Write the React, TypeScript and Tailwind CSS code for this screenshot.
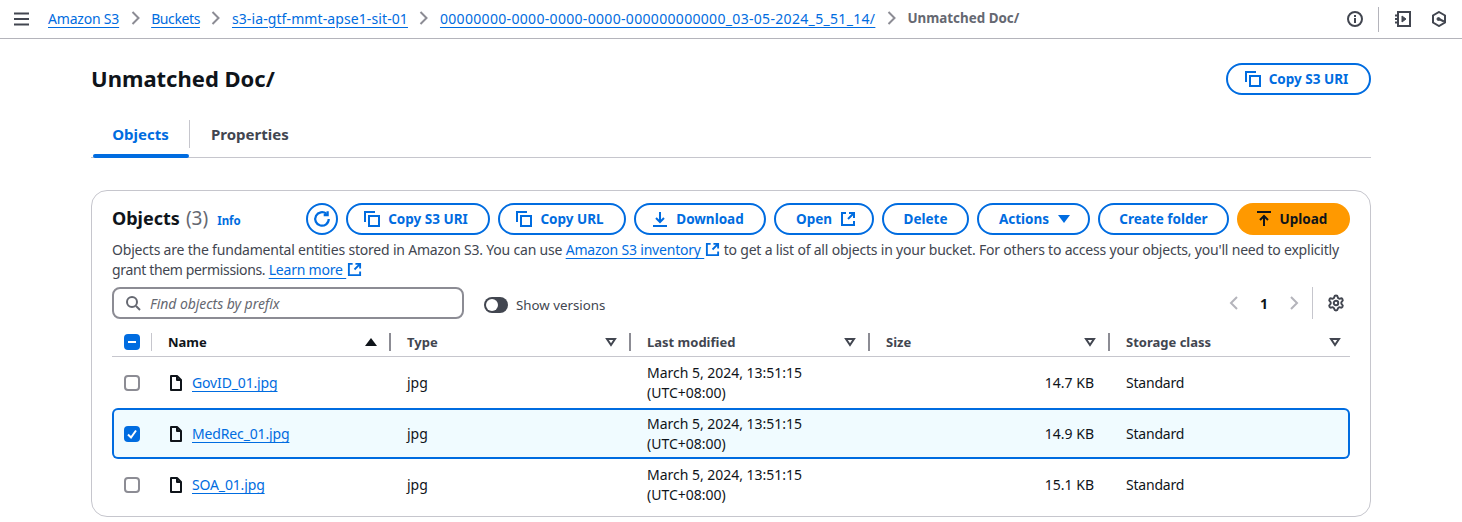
import React from 'react';
import { Settings } from 'lucide-react';

const LINK = 'text-[#006ce0] underline underline-offset-[3px] decoration-1';

const CopyIcon = () => (
  <svg width="16" height="16" viewBox="0 0 16 16" fill="none" stroke="currentColor" strokeWidth="2">
    <path d="M1 11V1h10" />
    <rect x="5" y="5" width="10" height="10" />
  </svg>
);

const ExternalIcon = ({ size = 16 }: { size?: number }) => (
  <svg width={size} height={size} viewBox="0 0 16 16" fill="none" stroke="currentColor" strokeWidth="2">
    <path d="M6 2H2v12h12v-4" />
    <path d="M9 2h5v5M14 2L8 8" />
  </svg>
);

const SortIcon = () => (
  <svg width="12" height="10" viewBox="0 0 12 10" fill="none" stroke="#424650" strokeWidth="2">
    <path d="M2 2h8L6 8z" />
  </svg>
);

const FileIcon = () => (
  <svg width="16" height="16" viewBox="0 0 16 16" fill="none" stroke="#0f141a" strokeWidth="2" strokeLinejoin="round">
    <path d="M3 1h6l4 4v10H3z" />
    <path d="M9 1v4h4" />
  </svg>
);

const Btn = ({ children, className = '' }: { children: React.ReactNode; className?: string }) => (
  <button className={`h-[32px] flex items-center justify-center gap-[8px] rounded-full border-2 border-[#006ce0] bg-white text-[#006ce0] text-[13.5px] font-bold ${className}`}>
    {children}
  </button>
);

const Checkbox = ({ checked }: { checked?: boolean }) =>
  checked ? (
    <span className="w-[16px] h-[16px] rounded-[4px] bg-[#006ce0] flex items-center justify-center">
      <svg width="12" height="12" viewBox="0 0 12 12" fill="none" stroke="white" strokeWidth="2">
        <path d="M2 6.500l3 3 5-7" />
      </svg>
    </span>
  ) : (
    <span className="w-[16px] h-[16px] rounded-[4px] border-2 border-[#8c8c94] bg-white" />
  );

const HeaderCell = ({ label, className = 'mr-[12px]' }: { label: string; className?: string }) => (
  <div className="flex items-center">
    <span className="w-[2px] h-[18px] bg-[#8c8c94] shrink-0" />
    <span className="ml-[16px] pt-[1px] text-[13px] font-bold text-[#424650]">{label}</span>
    <span className={`ml-auto flex items-center ${className}`}>
      <SortIcon />
    </span>
  </div>
);

const rows = [
  { name: 'GovID_01.jpg', size: '14.7 KB' },
  { name: 'MedRec_01.jpg', size: '14.9 KB', selected: true },
  { name: 'SOA_01.jpg', size: '15.1 KB' },
];

function Chevron() {
  return (
    <svg className="mx-[11.5px]" width="9" height="14" viewBox="0 0 9 14" fill="none" stroke="#8c8c94" strokeWidth="2">
      <path d="M1.500 1l6 6-6 6" />
    </svg>
  );
}

export default function App() {
  return (
    <div className="w-[1462px] h-[522px] overflow-hidden bg-white text-[14px] text-[#424650] font-['Noto_Sans',sans-serif]">
      {/* breadcrumb bar */}
      <div className="h-[39px] border-b border-[#b4b4bb] flex items-center px-[14px]">
        <svg width="16" height="14" viewBox="0 0 16 14" stroke="#424650" strokeWidth="2">
          <path d="M0 1.500h15M0 7h15M0 12.500h15" />
        </svg>
        <nav className="ml-[18px] flex items-center text-[14px] -mt-[2px]">
          <a className={`${LINK} tracking-[-0.2px]`}>Amazon S3</a>
          <Chevron />
          <a className={`${LINK} tracking-[-0.4px]`}>Buckets</a>
          <Chevron />
          <a className={`${LINK} tracking-[0.1px]`}>s3-ia-gtf-mmt-apse1-sit-01</a>
          <Chevron />
          <a className={`${LINK} tracking-[0.32px]`}>00000000-0000-0000-0000-000000000000_03-05-2024_5_51_14/</a>
          <Chevron />
          <span className="text-[13.4px] font-bold text-[#656871]">Unmatched Doc/</span>
        </nav>
        <div className="ml-auto flex items-center">
          <svg width="16" height="16" viewBox="0 0 16 16" fill="none" stroke="#424650" strokeWidth="2">
            <circle cx="8" cy="8" r="7" />
            <path d="M8 7v5M8 4v2" />
          </svg>
          <span className="w-px h-[25px] bg-[#b4b4bb] ml-[15px] mr-[16px]" />
          <svg width="16" height="16" viewBox="0 0 16 16" fill="none" stroke="#424650" strokeWidth="2">
            <path d="M3 1h12v14H3z" />
            <path d="M0 4.500h4M0 8h4M0 11.500h4" />
            <path d="M7 5v6l4-3z" fill="#424650" strokeWidth="1" />
          </svg>
          <svg className="ml-[20px] mr-[1px]" width="16" height="16" viewBox="0 0 16 16" fill="none" stroke="#424650" strokeWidth="2">
            <path d="M8 1l6 3.500v7L8 15l-6-3.500v-7z" />
            <circle cx="7.500" cy="8" r="1.500" fill="#424650" strokeWidth="1" />
            <path d="M8 8l5 2.500" />
          </svg>
        </div>
      </div>

      <main className="px-[91px]">
        {/* page header */}
        <div className="h-[56px] pt-[24px] flex items-start justify-between">
          <h1 className="text-[22px] leading-[30px] font-bold text-[#0f141a]">Unmatched Doc/</h1>
          <Btn className="w-[145px] pr-[4px]">
            <CopyIcon />
            Copy S3 URI
          </Btn>
        </div>

        {/* tabs */}
        <div className="mt-[25px] h-[38px] border-b border-[#c6c6cd] flex items-start">
          <div className="w-[98px] h-[38px] relative flex justify-center pt-[4px]">
            <span className="text-[15px] leading-[20px] font-bold text-[#006ce0] pl-[1px]">Objects</span>
            <span className="absolute left-[2px] right-0 bottom-0 h-[4px] rounded-[2px] bg-[#006ce0]" />
          </div>
          <span className="w-px h-[28px] bg-[#c6c6cd]" />
          <span className="ml-[21px] pt-[4px] text-[15px] leading-[20px] font-bold text-[#424650]">Properties</span>
        </div>

        {/* objects container */}
        <section className="mt-[32px] h-[327px] rounded-[16px] border border-[#c6c6cd] px-[20px] pt-[12px]">
          <div className="flex items-center justify-between h-[32px]">
            <div className="flex items-baseline -mt-[2px]">
              <h2 className="text-[18px] font-bold leading-[24px] text-[#0f141a]">Objects</h2>
              <span className="ml-[6px] text-[19px] leading-[24px] text-[#656871]">(3)</span>
              <span className="ml-[9px] text-[11.5px] font-bold text-[#006ce0]">Info</span>
            </div>
            <div className="flex items-center gap-[8px]">
              <Btn className="w-[32px]">
                <svg width="18" height="18" viewBox="0 0 16 16" fill="none" stroke="currentColor" strokeWidth="2">
                  <path d="M14 8a6 6 0 1 1-2-4.500" />
                  <path d="M13 1v3.500H9.500" />
                </svg>
              </Btn>
              <Btn className="w-[144px] pr-[4px]"><CopyIcon />Copy S3 URI</Btn>
              <Btn className="w-[128px] pr-[4px]"><CopyIcon />Copy URL</Btn>
              <Btn className="w-[132px] pr-[4px]">
                <svg width="16" height="16" viewBox="0 0 16 16" fill="none" stroke="currentColor" strokeWidth="2">
                  <path d="M8 1v10M4 7l4 4 4-4M1 15h14" />
                </svg>
                Download
              </Btn>
              <Btn className="w-[100px] pl-[4px]">Open <ExternalIcon /></Btn>
              <Btn className="w-[87px]">Delete</Btn>
              <Btn className="w-[113px] pl-[3px]">
                Actions
                <svg width="14" height="10" viewBox="0 0 14 10" fill="currentColor"><path d="M1 1h12L7 9z" /></svg>
              </Btn>
              <Btn className="w-[131px]">Create folder</Btn>
              <button className="w-[113px] h-[32px] pr-[4px] rounded-full bg-[#ff9900] text-[#0f141a] text-[13.5px] font-bold flex items-center justify-center gap-[8px]">
                <svg width="16" height="16" viewBox="0 0 16 16" fill="none" stroke="currentColor" strokeWidth="2">
                  <path d="M1 1h14M8 15V5M4 9l4-4 4 4" />
                </svg>
                Upload
              </button>
            </div>
          </div>

          <p className="mt-[5px] text-[14px] leading-[20px] text-[#424650] tracking-[-0.2px]">
            Objects are the fundamental entities stored in Amazon S3. You can use{' '}
            <a className={LINK}>Amazon S3 inventory&nbsp;</a>
            <span className="inline-block align-[-2px] text-[#006ce0] ml-[1px]"><ExternalIcon size={15} /></span>{' '}
            to get a list of all objects in your bucket. For others to access your objects, you'll need to explicitly{' '}
            <span className="tracking-[-0.35px]">grant them permissions.</span>{' '}
            <a className={LINK}>Learn more&nbsp;</a>
            <span className="inline-block align-[-2px] text-[#006ce0] ml-[1px]"><ExternalIcon size={15} /></span>
          </p>

          {/* filter row */}
          <div className="mt-[7px] h-[32px] flex items-center">
            <div className="w-[352px] h-[32px] rounded-[8px] border-2 border-[#8c8c94] flex items-center pl-[11px]">
              <svg width="16" height="16" viewBox="0 0 16 16" fill="none" stroke="#656871" strokeWidth="2">
                <circle cx="7" cy="7" r="5" />
                <path d="M11 11l4 4" />
              </svg>
              <span className="ml-[9px] text-[14px] italic text-[#656871] tracking-[-0.05px]">Find objects by prefix</span>
            </div>
            <span className="ml-[20px] w-[24px] h-[16px] rounded-full bg-[#424650] relative mt-[4px]">
              <span className="absolute left-[2px] top-[2px] w-[12px] h-[12px] rounded-full bg-white" />
            </span>
            <span className="ml-[8px] mt-[6px] text-[13.3px] text-[#424650]">Show versions</span>
            <div className="ml-auto flex items-center">
              <svg width="12" height="16" viewBox="0 0 12 16" fill="none" stroke="#b4b4bb" strokeWidth="2"><path d="M9 2L3 8l6 6" /></svg>
              <span className="mx-[20px] text-[14px] font-bold text-[#0f141a]">1</span>
              <svg width="12" height="16" viewBox="0 0 12 16" fill="none" stroke="#b4b4bb" strokeWidth="2"><path d="M3 2l6 6-6 6" /></svg>
              <span className="ml-[12px] w-px h-[32px] bg-[#c6c6cd]" />
              <Settings className="ml-[14px] mr-[5px] text-[#424650]" size={18} strokeWidth={2.6} />
            </div>
          </div>

          {/* table */}
          <div className="mt-[9px]">
            <div className="grid grid-cols-[39px_238px_240px_239px_240px_242px] h-[29px] items-center border-b border-[#c6c6cd]">
              <div className="pl-[12px]">
                <span className="w-[16px] h-[16px] rounded-[4px] bg-[#006ce0] flex items-center justify-center">
                  <span className="w-[8px] h-[2px] bg-white" />
                </span>
              </div>
              <div className="flex items-center">
                <span className="w-px h-[18px] bg-[#c6c6cd]" />
                <span className="ml-[16px] pt-[1px] text-[13px] font-bold text-[#0f141a]">Name</span>
                <svg className="ml-auto mr-[12px]" width="12" height="10" viewBox="0 0 12 10" fill="#0f141a"><path d="M6 1l6 8H0z" /></svg>
              </div>
              <HeaderCell label="Type" />
              <HeaderCell label="Last modified" />
              <HeaderCell label="Size" />
              <HeaderCell label="Storage class" className="mr-[9px]" />
            </div>
            {rows.map((r) => (
              <div
                key={r.name}
                className={`grid grid-cols-[39px_238px_240px_239px_240px_242px] h-[51px] items-center text-[14px] text-[#0f141a] ${
                  r.selected ? 'rounded-[6px] ring-2 ring-inset ring-[#006ce0] bg-[#f0fbff]' : ''
                }`}
              >
                <div className="pl-[12px] flex">
                  <Checkbox checked={r.selected} />
                </div>
                <div className="pl-[17px] flex items-center gap-[8px]">
                  <FileIcon />
                  <a className={`${LINK} tracking-[-0.15px]`}>{r.name}</a>
                </div>
                <div className="pl-[18px]">jpg</div>
                <div className="pl-[18px] leading-[20px] tracking-[-0.02px]">
                  March 5, 2024, 13:51:15
                  <br />
                  (UTC+08:00)
                </div>
                <div className="text-right pr-[14px]">{r.size}</div>
                <div className="pl-[18px] tracking-[-0.2px]">Standard</div>
              </div>
            ))}
          </div>
        </section>
      </main>
    </div>
  );
}
